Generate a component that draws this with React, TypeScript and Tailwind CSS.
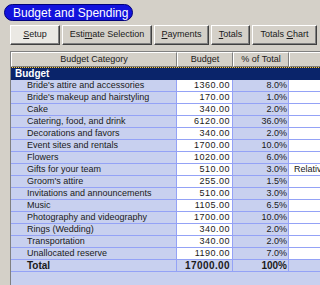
import React from 'react';

interface Row {
  name: string;
  amount: string;
  pct: string;
  note?: string;
}

const rows: Row[] = [
  { name: "Bride's attire and accessories", amount: '1360.00', pct: '8.0%' },
  { name: "Bride's makeup and hairstyling", amount: '170.00', pct: '1.0%' },
  { name: 'Cake', amount: '340.00', pct: '2.0%' },
  { name: 'Catering, food, and drink', amount: '6120.00', pct: '36.0%' },
  { name: 'Decorations and favors', amount: '340.00', pct: '2.0%' },
  { name: 'Event sites and rentals', amount: '1700.00', pct: '10.0%' },
  { name: 'Flowers', amount: '1020.00', pct: '6.0%' },
  { name: 'Gifts for your team', amount: '510.00', pct: '3.0%', note: 'Relatives' },
  { name: "Groom's attire", amount: '255.00', pct: '1.5%' },
  { name: 'Invitations and announcements', amount: '510.00', pct: '3.0%' },
  { name: 'Music', amount: '1105.00', pct: '6.5%' },
  { name: 'Photography and videography', amount: '1700.00', pct: '10.0%' },
  { name: 'Rings (Wedding)', amount: '340.00', pct: '2.0%' },
  { name: 'Transportation', amount: '340.00', pct: '2.0%' },
  { name: 'Unallocated reserve', amount: '1190.00', pct: '7.0%' },
];

const Tab: React.FC<{ active?: boolean; width: string; children: React.ReactNode }> = ({ active, width, children }) => (
  <div
    className={`${width} h-[20px] flex items-center justify-center whitespace-nowrap border-t border-l border-white border-r border-b border-r-[#404040] border-b-[#404040] shadow-[inset_-1px_-1px_0_#808080] ${
      active ? 'bg-[#ebe9e4]' : 'bg-[#d4d0c8]'
    }`}
  >
    {children}
  </div>
);

const HeadCell: React.FC<{ width: string; children?: React.ReactNode }> = ({ width, children }) => (
  <div
    className={`${width} h-[15px] flex items-center justify-center bg-[#d4d0c8] border-t border-l border-white border-r border-b border-r-[#808080] border-b-[#808080] leading-none`}
  >
    {children}
  </div>
);

export default function App() {
  return (
    <div
      className="w-[320px] h-[285px] overflow-hidden bg-[#d4d0c8] text-[9px] text-[#1a1a1a]"
      style={{ fontFamily: '"Liberation Sans", Arial, sans-serif' }}
    >
      <div className="pt-[4px] pl-[4px]">
        <div className="w-[129px] h-[17px] rounded-full bg-[#1212dc] border border-[#00007a] flex items-center pl-[8px] text-white text-[12px] leading-none">
          Budget and Spending
        </div>
      </div>

      <div className="mt-[4px] pl-[10px] flex gap-[2px]">
        <Tab active width="w-[50px]">
          <span><u>S</u>etup</span>
        </Tab>
        <Tab width="w-[90px]">
          <span>Esti<u>m</u>ate Selection</span>
        </Tab>
        <Tab width="w-[55px]">
          <span><u>P</u>ayments</span>
        </Tab>
        <Tab width="w-[39px]">
          <span><u>T</u>otals</span>
        </Tab>
        <Tab width="w-[65px]">
          <span>Totals <u>C</u>hart</span>
        </Tab>
      </div>

      <div className="mt-[6px] ml-[10px] w-[330px] border-t border-l border-[#808080] bg-[#c8d0ef]">
        <div className="flex">
          <HeadCell width="w-[166px]">Budget Category</HeadCell>
          <HeadCell width="w-[56px]">Budget</HeadCell>
          <HeadCell width="w-[56px]">% of Total</HeadCell>
          <HeadCell width="flex-1" />
        </div>
        <div className="h-[1px] bg-[repeating-linear-gradient(90deg,#3a2a10_0_1px,#e8c860_1px_2px)]" />
        <div className="h-[12px] bg-[#0a246a] text-white font-bold text-[10px] flex items-center pl-[4px] leading-none">
          Budget
        </div>
        {rows.map((r) => (
          <div key={r.name} className="flex h-[12px] leading-none">
            <div className="w-[166px] border-r border-b border-[#94a2f6] pl-[16px] flex items-center whitespace-nowrap overflow-hidden">
              {r.name}
            </div>
            <div className="w-[56px] bg-white border-r border-b border-[#94a2f6] flex items-center justify-end pr-[2px] tracking-[0.5px]">
              {r.amount}
            </div>
            <div className="w-[56px] border-r border-b border-[#94a2f6] flex items-center justify-end pr-[1px]">
              {r.pct}
            </div>
            <div className="flex-1 bg-white border-b border-[#94a2f6] flex items-center pl-[5px] whitespace-nowrap overflow-hidden">
              {r.note}
            </div>
          </div>
        ))}
        <div className="flex h-[12px] leading-none font-bold text-[10px]">
          <div className="w-[166px] border-r border-b border-[#94a2f6] pl-[16px] flex items-center">Total</div>
          <div className="w-[56px] border-r border-b border-[#94a2f6] flex items-center justify-end pr-[2px] tracking-[0.4px]">
            17000.00
          </div>
          <div className="w-[56px] border-r border-b border-[#94a2f6] flex items-center justify-end pr-[1px]">
            100%
          </div>
          <div className="flex-1 border-b border-[#94a2f6]" />
        </div>
        <div className="h-[20px]" />
      </div>
    </div>
  );
}
